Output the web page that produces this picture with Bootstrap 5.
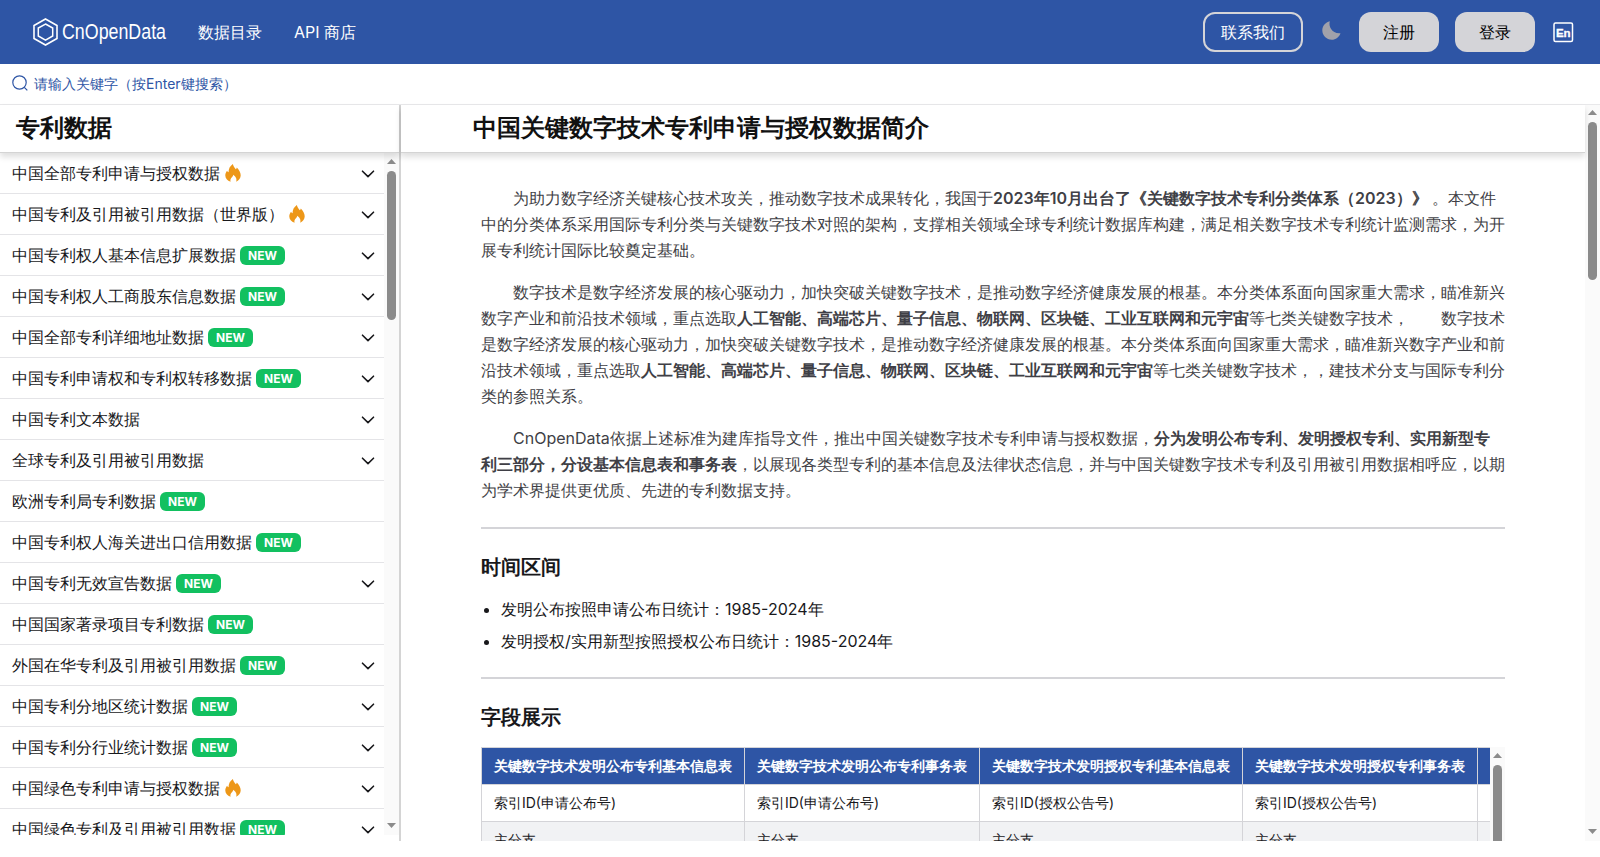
<!DOCTYPE html>
<html>
<head>
<meta charset="utf-8">
<meta name="viewport" content="width=device-width, initial-scale=1">
<title>CnOpenData</title>
<link href="https://cdn.jsdelivr.net/npm/bootstrap@5.3.0/dist/css/bootstrap.min.css" rel="stylesheet">
<style>
body{font-family:Inter,sans-serif;text-spacing-trim:space-all;height:857px;overflow:hidden;background:#fff;color:#18181b}
b{font-weight:600}
.app{height:841px;overflow:hidden}
.topbar{height:64px;background:#2e55a5;padding:0 26px 0 33px}
.topbar a{color:#fff;text-decoration:none;line-height:24px}
.brand-name{font:22px/24px "Liberation Sans",sans-serif;transform:scaleX(.81);transform-origin:left;width:104px;white-space:nowrap}
.topbtn{width:80px;height:40px;border-radius:12px;background:#d4d4d8;border:0;padding:0;color:#000}
.topbtn.contact{width:100px;background:transparent;border:2px solid #d4d4d8;color:#fff}
.searchbar{height:41px;border-bottom:1px solid #e8e8ea;padding:0 0 2px 12px;color:#2e55a5;font-size:14px}
.side{width:401px;border-right:2px solid #d4d4d4}
.headbar{height:48px;border-bottom:1px solid #d4d4d4;box-shadow:0 4px 6px rgba(0,0,0,.13);font-size:24px;font-weight:600;color:#111;position:relative;z-index:1;background:#fff;padding-bottom:2px}
.side-scroll{height:682px;overflow:hidden}
.item{height:41px;padding:0 9px 0 12px;border-bottom:1px solid #e4e4e7;white-space:nowrap;color:#18181b}
.tag-new{background:#12c060;color:#fff;font-size:12px;font-weight:700;line-height:19px;width:45px;border-radius:6px;text-align:center;margin-left:4px}
.sbar{width:15px;background:#fafafa;padding:5px 0}
.sbar .thumb{width:9px;border-radius:5px;background:#8b8b8b;margin-top:5px}
.tri{width:9px;height:5px;background:#8b8b8b;clip-path:polygon(50% 0,100% 100%,0 100%)}
.tri.down{transform:scaleY(-1)}
.content{padding:32px 0 0 80px}
.content p{line-height:26px;margin:0 0 16px;color:#3f3f46;white-space:nowrap}
.content hr{margin:0;width:1024px;border:0;height:2px;background:#d4d4d8;opacity:1}
.content h2{font-size:20px;line-height:28px;font-weight:600;margin:24px 0 16px;color:#18181b}
.content ul{margin:0;padding-left:20px;line-height:24px}
.content li{margin-bottom:8px}
.tblwrap{width:1024px;height:94px;overflow:hidden}
.tblclip{width:1009px;overflow:hidden}
.fields{border-collapse:collapse;font-size:14px;line-height:20px;white-space:nowrap;width:1300px;table-layout:fixed}
.fields th{background:#2e55a5;color:#fff;font-weight:600}
.fields th,.fields td{border:1px solid #d4d4d8;padding:8px 12px;height:37px}
.fields tr.alt td{background:#f1f2f4}
</style>
</head>
<body>
<svg class="d-none"><defs>
<symbol id="flame" viewBox="0 0 16 18"><path fill="#ed9718" d="M7.900 0C8.300 2.200 9.400 3.700 10.800 5.300c.6-.5.9-1 1-1.700C14 5.800 15.700 8.500 15.700 11.300c0 2.900-1.700 5.200-4.500 6.400.7-2.300.2-4.600-2.900-6.900-.1 1.100-.7 1.700-1.400 2.400-1.300 1.300-1.800 2.800-1.300 4.500C2.300 16.700.3 14.300.3 11.500c0-1.900.7-3.300 1.800-4.700.3.9.8 1.300 1.500 1.500C3.400 5 5 1.900 7.900 0z"/></symbol>
<symbol id="chev" viewBox="0 0 14 8"><path d="M1.500 1.200 7 6.600l5.500-5.400" fill="none" stroke="#18181b" stroke-width="1.600" stroke-linecap="round" stroke-linejoin="round"/></symbol>
</defs></svg>
<div class="app d-flex flex-column">
<nav class="topbar d-flex align-items-center justify-content-between">
  <div class="d-flex align-items-center">
    <a href="#" class="d-flex align-items-center">
      <svg width="25" height="28" viewBox="0 0 25 28" fill="none" stroke="#fff"><path d="M12.500 1 24 7.500v13L12.500 27 1 20.500v-13z" stroke-width="1.600"/><path d="M12.500 6 19.700 10v8L12.500 22.200 5.300 18v-8z" stroke-width="1.500"/></svg>
      <span class="brand-name ms-1">CnOpenData</span>
    </a>
    <a href="#" class="ms-4 ps-2">数据目录</a>
    <a href="#" class="ms-4 ps-2">API 商店</a>
  </div>
  <div class="d-flex align-items-center">
    <button class="topbtn contact">联系我们</button>
    <svg class="mb-1" style="margin:0 18px 0 19px" width="19" height="19" viewBox="0 0 19 19"><path fill="#a1a1aa" d="M7.800.3C6.300 5.500 10 13 18.500 12.200 17 16.300 13.800 18.700 9.800 18.700 4.500 18.700.3 14.600.3 9.300.3 5 3.500 1.300 7.800.3z"/></svg>
    <button class="topbtn">注册</button>
    <button class="topbtn ms-3">登录</button>
    <svg style="margin-left:18px" width="21" height="21" viewBox="0 0 21 21"><rect x="1" y="1" width="18.500" height="18.500" rx="1.500" fill="none" stroke="#fff" stroke-width="1.500"/><text x="10.300" y="14.500" text-anchor="middle" font-family="Liberation Sans" font-weight="700" font-size="11.500" fill="#fff" stroke="#fff" stroke-width=".3">En</text></svg>
  </div>
</nav>
<div class="searchbar d-flex align-items-center">
  <svg width="16" height="16" viewBox="0 0 16 16" fill="none" stroke="#2e55a5" stroke-width="1.200"><circle cx="7.500" cy="7.500" r="6.700"/><path d="m12.300 12.300 3 3"/></svg>
  <span style="margin-left:6px">请输入关键字（按Enter键搜索）</span>
</div>
<div class="d-flex flex-grow-1">
  <aside class="side flex-shrink-0">
    <div class="headbar d-flex align-items-center ps-3">专利数据</div>
    <div class="d-flex side-scroll">
      <div class="flex-grow-1" id="list"></div>
      <div class="sbar d-flex flex-column align-items-center" style="padding-top:6px"><div class="tri"></div><div class="thumb" style="height:149px;margin-top:7px"></div><div class="tri down mt-auto" style="margin-bottom:2px"></div></div>
    </div>
  </aside>
  <main class="flex-grow-1">
    <div class="headbar d-flex align-items-center" style="padding-left:72px">中国关键数字技术专利申请与授权数据简介</div>
    <div class="content">
      <p>　　为助力数字经济关键核心技术攻关，推动数字技术成果转化，我国于<b>2023年10月出台了《关键数字技术专利分类体系（2023）》</b> 。本文件<br>中的分类体系采用国际专利分类与关键数字技术对照的架构，支撑相关领域全球专利统计数据库构建，满足相关数字技术专利统计监测需求，为开<br>展专利统计国际比较奠定基础。</p>
      <p>　　数字技术是数字经济发展的核心驱动力，加快突破关键数字技术，是推动数字经济健康发展的根基。本分类体系面向国家重大需求，瞄准新兴<br>数字产业和前沿技术领域，重点选取<b>人工智能、高端芯片、量子信息、物联网、区块链、工业互联网和元宇宙</b>等七类关键数字技术，　　数字技术<br>是数字经济发展的核心驱动力，加快突破关键数字技术，是推动数字经济健康发展的根基。本分类体系面向国家重大需求，瞄准新兴数字产业和前<br>沿技术领域，重点选取<b>人工智能、高端芯片、量子信息、物联网、区块链、工业互联网和元宇宙</b>等七类关键数字技术，，建技术分支与国际专利分<br>类的参照关系。</p>
      <p>　　CnOpenData依据上述标准为建库指导文件，推出中国关键数字技术专利申请与授权数据，<b>分为发明公布专利、发明授权专利、实用新型专<br>利三部分，分设基本信息表和事务表</b>，以展现各类型专利的基本信息及法律状态信息，并与中国关键数字技术专利及引用被引用数据相呼应，以期<br>为学术界提供更优质、先进的专利数据支持。</p>
      <hr style="margin-top:24px">
      <h2>时间区间</h2>
      <ul><li>发明公布按照申请公布日统计：1985-2024年</li><li>发明授权/实用新型按照授权公布日统计：1985-2024年</li></ul>
      <hr style="margin-top:24px">
      <h2>字段展示</h2>
      <div class="tblwrap d-flex">
        <div class="tblclip"><table class="fields">
          <colgroup><col style="width:263px"><col style="width:235px"><col style="width:263px"><col style="width:235px"><col></colgroup>
          <tr><th>关键数字技术发明公布专利基本信息表</th><th>关键数字技术发明公布专利事务表</th><th>关键数字技术发明授权专利基本信息表</th><th>关键数字技术发明授权专利事务表</th><th></th></tr>
          <tr><td>索引ID(申请公布号)</td><td>索引ID(申请公布号)</td><td>索引ID(授权公告号)</td><td>索引ID(授权公告号)</td><td></td></tr>
          <tr class="alt"><td>主分支</td><td>主分支</td><td>主分支</td><td>主分支</td><td></td></tr>
        </table></div>
        <div class="sbar d-flex flex-column align-items-center" style="padding-top:6px"><div class="tri flex-shrink-0"></div><div class="thumb flex-shrink-0" style="height:100px;margin-top:7px"></div></div>
      </div>
    </div>
  </main>
  <div class="sbar d-flex flex-column align-items-center"><div class="tri"></div><div class="thumb" style="height:158px;margin-top:7px"></div><div class="tri down mt-auto" style="margin-bottom:2px"></div></div>
</div>
</div>
<script src="https://cdn.jsdelivr.net/npm/bootstrap@5.3.0/dist/js/bootstrap.bundle.min.js"></script>
<script>
const items=[['中国全部专利申请与授权数据','f',1],['中国专利及引用被引用数据（世界版）','f',1],['中国专利权人基本信息扩展数据','n',1],['中国专利权人工商股东信息数据','n',1],['中国全部专利详细地址数据','n',1],['中国专利申请权和专利权转移数据','n',1],['中国专利文本数据','',1],['全球专利及引用被引用数据','',1],['欧洲专利局专利数据','n',0],['中国专利权人海关进出口信用数据','n',0],['中国专利无效宣告数据','n',1],['中国国家著录项目专利数据','n',0],['外国在华专利及引用被引用数据','n',1],['中国专利分地区统计数据','n',1],['中国专利分行业统计数据','n',1],['中国绿色专利申请与授权数据','f',1],['中国绿色专利及引用被引用数据','n',1]];
document.getElementById('list').innerHTML=items.map(([t,k,c])=>`<div class="item d-flex align-items-center"><span>${t}</span>${k==='n'?'<span class="tag-new">NEW</span>':k==='f'?'<svg class="ms-1" width="18" height="18"><use href="#flame"/></svg>':''}${c?'<svg class="ms-auto" style="margin-top:1px" width="14" height="8"><use href="#chev"/></svg>':''}</div>`).join('');
</script>
</body>
</html>
